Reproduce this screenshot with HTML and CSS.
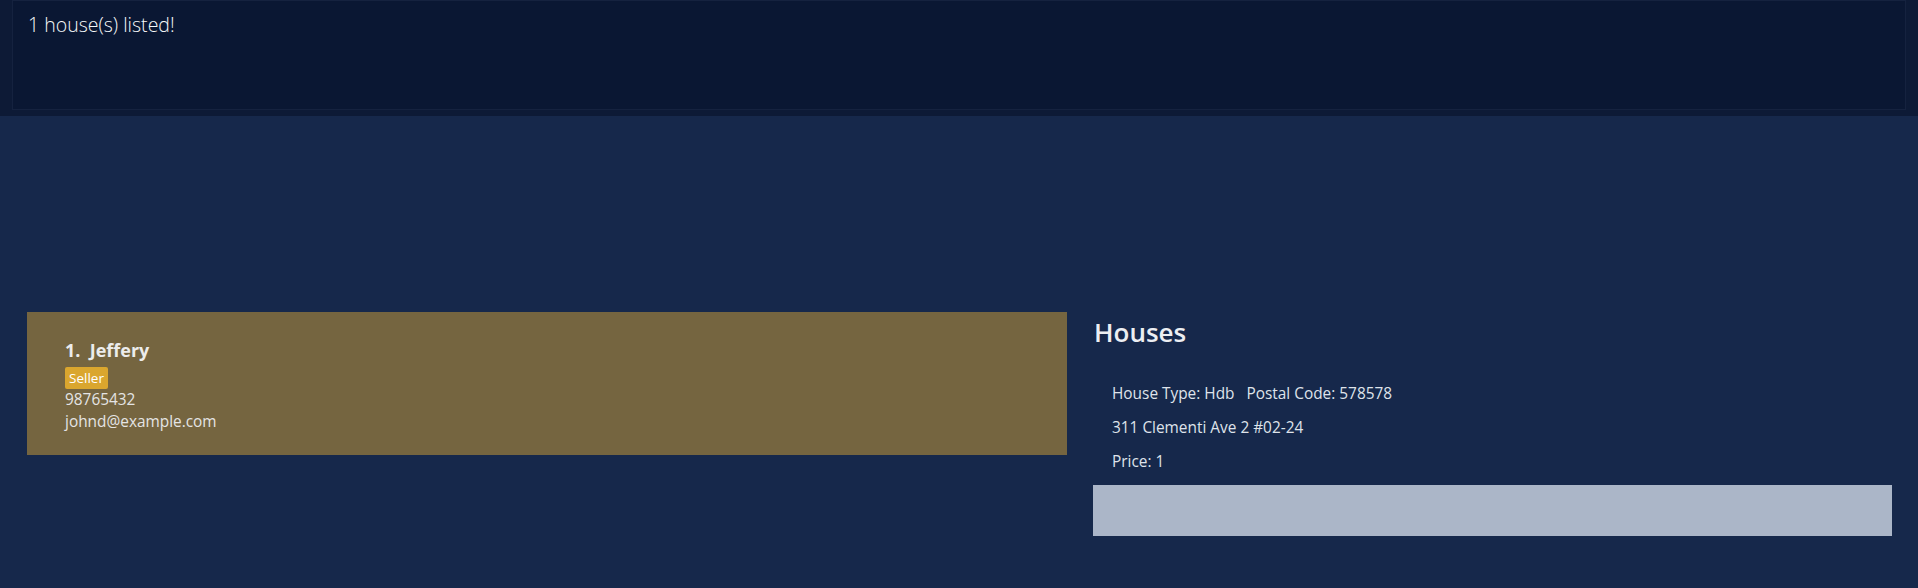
FILE: index.html
```html
<!DOCTYPE html>
<html>
<head>
<meta charset="utf-8">
<link rel="stylesheet" href="styles.css">
</head>
<body>
  <div class="result-bar">
    <div class="result-box">1 house(s) listed!</div>
  </div>
  <div class="main">
    <div class="person-list">
      <div class="person-card">
        <div class="person-name">1.&nbsp;&nbsp;Jeffery</div>
        <div class="tags"><span class="tag">Seller</span></div>
        <div class="person-line">98765432</div>
        <div class="person-line">johnd@example.com</div>
      </div>
    </div>
    <div class="house-panel">
      <div class="house-title">Houses</div>
      <div class="house-info">
        <div class="house-line">House Type: Hdb&nbsp;&nbsp;&nbsp;Postal Code: 578578</div>
        <div class="house-line">311 Clementi Ave 2 #02-24</div>
        <div class="house-line">Price: 1</div>
      </div>
      <div class="house-footer"></div>
    </div>
  </div>
</body>
</html>
```

FILE: styles.css
```css
html, body {
  margin: 0;
  padding: 0;
}
body {
  background: #16284b;
  font-family: "Open Sans", "Noto Sans", sans-serif;
  color: #e6e6e6;
  width: 1918px;
  height: 588px;
  overflow: hidden;
}
.result-bar {
  background: #0d1a36;
  height: 116px;
  box-sizing: border-box;
  padding: 0 12px 6px 12px;
}
.result-box {
  height: 110px;
  box-sizing: border-box;
  background: #0a1733;
  border: 1px solid #15223f;
  padding: 11px 0 0 15px;
  font-size: 19.5px;
  font-weight: 300;
  color: #f6f7f9;
  line-height: 26px;
}
.main {
  display: flex;
  padding: 196px 0 0 27px;
  gap: 26px;
}
.person-list {
  width: 1040px;
}
.person-card {
  background: #756540;
  height: 143px;
  box-sizing: border-box;
  padding: 26px 0 0 38px;
}
.person-name {
  font-size: 18px;
  font-weight: 700;
  line-height: 24px;
  color: #ececec;
}
.tags {
  display: flex;
  margin-top: 5px;
}
.tag {
  background: #daa62e;
  color: #fff;
  font-size: 13.5px;
  line-height: 22px;
  padding: 0 4px;
  border-radius: 2px;
}
.person-line {
  font-size: 15.4px;
  line-height: 22px;
  color: #e4e4e4;
}
.house-panel {
  width: 799px;
}
.house-title {
  font-size: 26px;
  font-weight: 600;
  line-height: 36px;
  color: #eceef2;
  padding-left: 1px;
  margin-top: 2px;
}
.house-info {
  padding: 34px 0 0 19px;
}
.house-line {
  font-size: 15.4px;
  line-height: 20px;
  color: #dfe3ea;
  margin-bottom: 14px;
}
.house-footer {
  background: #abb6c8;
  height: 51px;
  margin-top: -1px;
}
```
